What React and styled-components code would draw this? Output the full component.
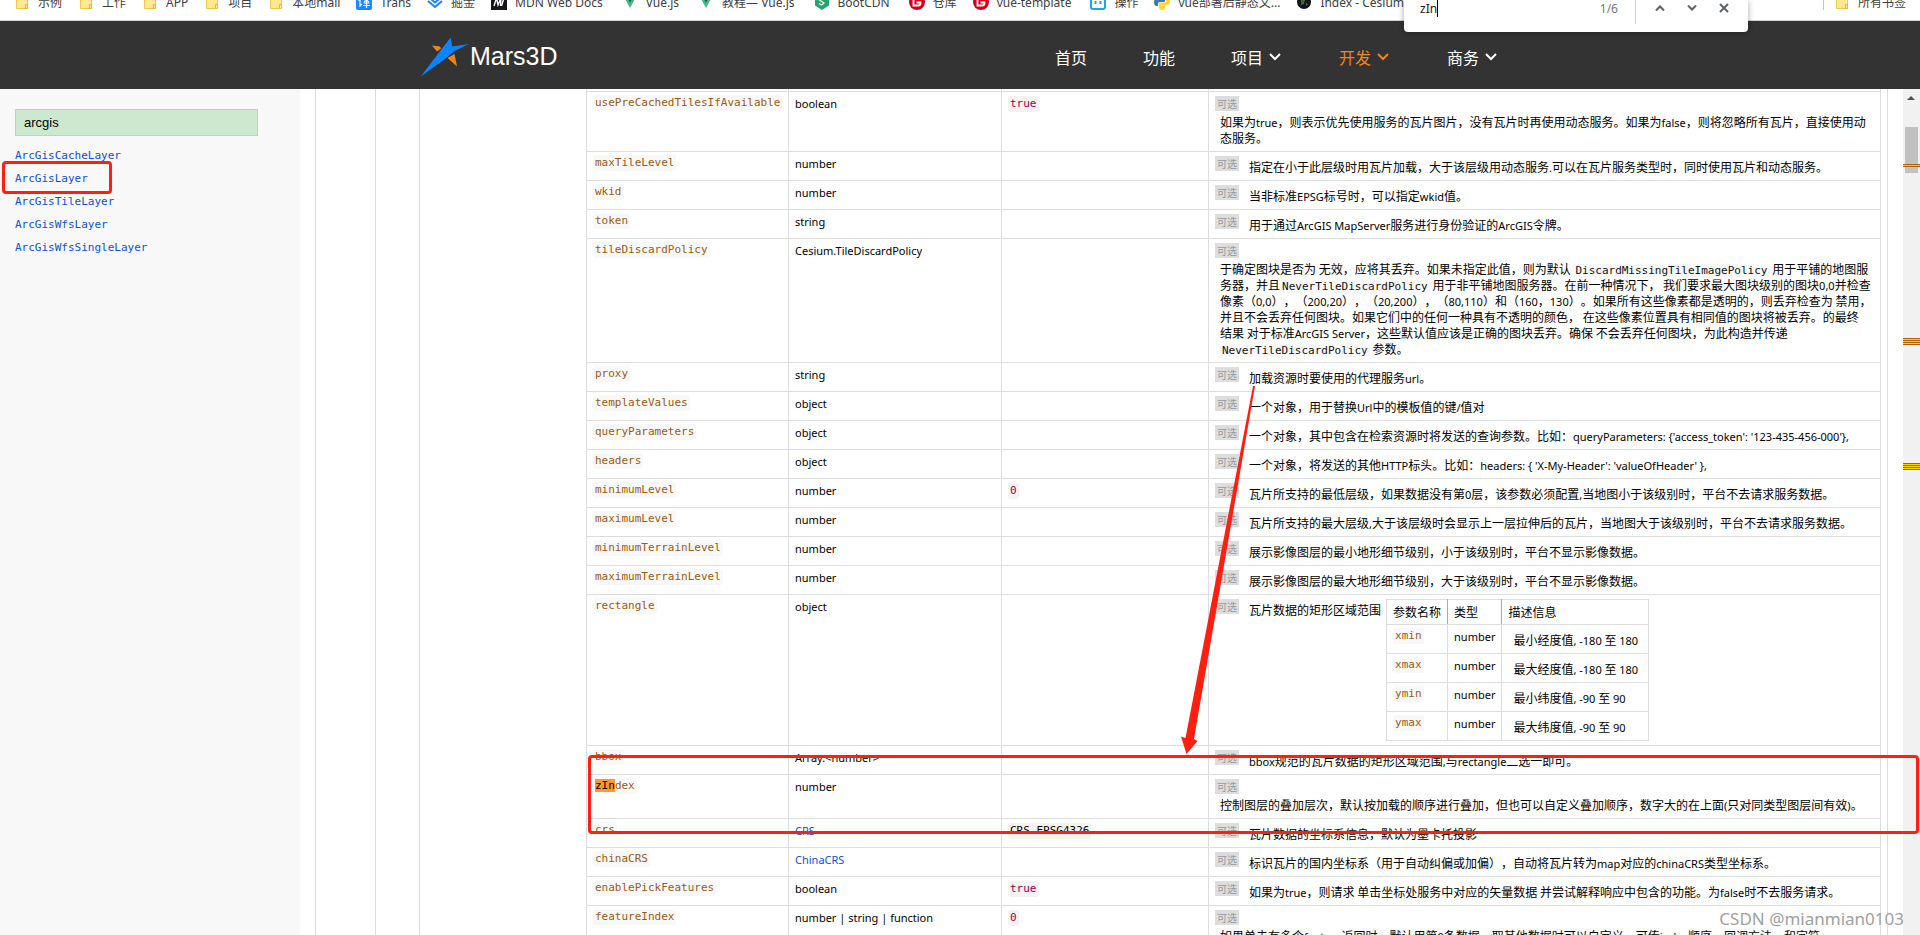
import React from 'react'
import styled, { createGlobalStyle } from 'styled-components'

const fonts = {
    sans: '"Noto Sans", "Noto Sans CJK SC", sans-serif',
    cjk: '"Noto Sans CJK SC", sans-serif',
    arial: '"Liberation Sans", sans-serif',
    mono: '"DejaVu Sans Mono", monospace',
}

const colors = {
    header: '#333333',
    accent: '#f08519',
    link: '#0d52d0',
    line: '#dddddd',
    code: '#9a5b10',
    red: '#ff1f10',
}

const GlobalStyle = createGlobalStyle`
    *, *::before, *::after {
        box-sizing : border-box;
    }
    body {
        margin : 0;
        background : #fff;
        color : #000;
        font-family : ${fonts.sans};
        font-size : 12px;
        overflow : hidden;
    }
    a {
        color : inherit;
        text-decoration : none;
    }
    button {
        border : 0;
        padding : 0;
        background : none;
        color : inherit;
        font : inherit;
    }
`

const Page = styled.div`
    position : relative;
    display : flex;
    flex-direction : column;
    height : 100vh;
    overflow : hidden;
`

/* bookmarks bar */

const BookmarkBar = styled.nav`
    display : flex;
    flex : none;
    justify-content : space-between;
    align-items : flex-start;
    height : 21px;
    padding : 0 14px;
    overflow : hidden;
    border-bottom : 1px solid #d0d4d4;
    color : #3c4043;
`

const BookmarkList = styled.div`
    display : flex;
    gap : 16px;
    margin-top : -6px;
`

const Bookmark = styled.a`
    display : flex;
    gap : 8px;
    height : 16px;
    margin-right : ${(p) => (p.$wide ? 3 : 0)}px;
    line-height : 18px;
    white-space : nowrap;

    svg {
        flex : none;
    }
`

const AllBookmarks = styled(BookmarkList)`
    &::before {
        content : '';
        width : 1px;
        height : 16px;
        margin-right : -6px;
        background : #c4c7c5;
    }
`

/* find in page */

const FindBar = styled.form`
    position : absolute;
    top : 0;
    right : 172px;
    z-index : 3;
    display : flex;
    width : 344px;
    height : 32px;
    padding : 0 8px 0 16px;
    border-radius : 0 0 4px 4px;
    background : #fff;
    box-shadow : 0 1px 6px rgba(0, 0, 0, 0.35);
    line-height : 18px;
`

const FindInput = styled.input`
    width : 18px;
    height : 17px;
    padding : 0;
    border : 0;
    border-right : 1px solid #000;
    outline : 0;
    color : #202124;
    font-family : ${fonts.sans};
    font-size : 12px;
`

const FindCount = styled.span`
    margin-left : auto;
    color : #777;
`

const FindDivider = styled.span`
    width : 1px;
    height : 24px;
    margin : 0 8px 0 17px;
    background : #d0d0d0;
`

const FindButton = styled.button`
    display : flex;
    justify-content : center;
    align-items : center;
    width : 32px;
    height : 16px;
    color : #5f6368;
`

/* site header */

const Header = styled.header`
    flex : none;
    height : 68px;
    background : ${colors.header};
    color : #fff;
`

const HeaderInner = styled.div`
    display : flex;
    justify-content : space-between;
    align-items : center;
    max-width : 1080px;
    height : 100%;
    margin : 0 auto;
    padding : 3px 1px 0 0;
`

const Logo = styled.a`
    display : flex;
    align-items : center;
    font-family : ${fonts.arial};
    font-size : 25px;
`

const Menu = styled.nav`
    display : flex;
    gap : 56px;
`

const MenuItem = styled.a`
    display : flex;
    align-items : center;
    gap : 6px;
    color : ${(p) => (p.$active ? colors.accent : '#fff')};
    font-family : ${fonts.cjk};
    font-size : 16px;
    line-height : 24px;

    svg {
        margin-right : 2px;
    }
`

/* body */

const Body = styled.div`
    display : flex;
    flex : 1;
    min-height : 0;
`

const Sidebar = styled.aside`
    flex : none;
    width : 300px;
    padding : 20px 15px;
    background : #f8f8f8;
`

const SearchInput = styled.input`
    display : block;
    width : 243px;
    height : 27px;
    padding : 0 8px;
    border : 1px solid #c8ccc8;
    outline : 0;
    background : #cce8cf;
    color : #000;
    font-family : ${fonts.arial};
    font-size : 13px;
`

const LinkList = styled.ul`
    margin : 8px 0 0;
    padding : 0;
    list-style : none;
    color : ${colors.link};
    font-family : ${fonts.mono};
    font-size : 11px;
    line-height : 23px;
`

const LinkItem = styled.li`
    position : relative;
`

const LinkFrame = styled.span`
    position : absolute;
    top : -6px;
    left : -13px;
    width : 110px;
    height : 33px;
    border : 3px solid ${colors.red};
    border-radius : 4px;
`

const Main = styled.main`
    display : flex;
    flex : 1;
    min-width : 0;
    margin-left : 15px;
    overflow : hidden;
    border-left : 1px solid ${colors.line};
`

const Gutter = styled.div`
    flex : none;
    width : ${(p) => p.$width}px;
    border-right : 1px solid ${colors.line};
`

const Content = styled.div`
    flex : 1;
    min-width : 0;
    margin-right : 15px;
    padding : 0 6px 0 166px;
    border-right : 1px solid ${colors.line};
`

const Table = styled.table`
    width : 100%;
    table-layout : fixed;
    border-collapse : collapse;

    td {
        padding : 4px 6px 5px;
        border : 1px solid ${colors.line};
        vertical-align : top;
        line-height : 16px;
    }
    td:first-child {
        padding-top : 3px;
    }
`

const Col = styled.col`
    width : ${(p) => p.$width}px;
`

const CutRow = styled.tr`
    td, td:first-child {
        height : 2px;
        padding : 0;
        border-top : 0;
    }
`

const Name = styled.code`
    display : inline-block;
    padding : 0 2px;
    border-radius : 3px;
    background : #f8f8f8;
    color : ${colors.code};
    font-family : ${fonts.mono};
    font-size : 11px;
    line-height : 16px;
    vertical-align : top;
`

const Value = styled(Name)`
    background : #f5f2f0;
    color : ${(p) => (p.$plain ? '#000' : '#990055')};
`

/* zero line height keeps the mixed fonts from growing the line */
const InlineCode = styled(Name)`
    display : inline;
    color : #111;
    line-height : 0;
    vertical-align : baseline;
`

const Hit = styled.mark`
    background : #ff9632;
    color : #000;
`

const Type = styled.span`
    display : block;
    color : ${(p) => (p.$link ? colors.link : 'inherit')};
    font-size : 11px;
    line-height : 16px;
`

const DescCell = styled.div`
    display : flex;
    flex-wrap : wrap;
    align-items : flex-start;
`

const Optional = styled.span`
    margin-right : 5px;
    padding : 0 2px;
    background : #dddddd;
    color : #999;
    font-family : ${fonts.cjk};
    font-size : 10px;
    line-height : 15px;
`

const Desc = styled.div`
    width : ${(p) => (p.$block ? '100%' : 'auto')};
    margin : 3px 0 0 5px;
    font-family : ${fonts.cjk};
    font-size : 12px;
    line-height : 16px;
    white-space : pre-line;
    text-spacing-trim : space-all;
`

const Latin = styled.span`
    font-family : ${fonts.sans};
    font-size : 11px;
    line-height : 0;
`

const SubTable = styled.table`
    margin : 0 0 -1px 5px;
    border-collapse : collapse;

    th, td {
        border : 1px solid ${colors.line};
        text-align : left;
        vertical-align : top;
        white-space : nowrap;
    }
    th {
        padding : 4px 6px;
        border-right-color : #aaa;
        font-weight : 400;
        font-family : ${fonts.cjk};
        line-height : 16px;
    }
    th:last-child {
        border-right-color : ${colors.line};
    }
    td:last-child {
        padding-right : 10px;
    }
`

/* scrollbar with the find marks */

const Scrollbar = styled.div`
    position : relative;
    flex : none;
    width : 17px;
    padding : 38px 2px 0;
    background : #f1f1f1;

    &::before {
        content : '';
        position : absolute;
        top : 7px;
        left : 4px;
        border : 4px solid transparent;
        border-top-width : 0;
        border-bottom-color : #505050;
    }
`

const Thumb = styled.div`
    height : 46px;
    background : #c1c1c1;
`

const FindMark = styled.span`
    position : absolute;
    left : 0;
    right : 0;
    top : ${(p) => p.$top}px;
    height : ${(p) => p.$height}px;
    background : repeating-linear-gradient(#b06000 0 1px, #ffd500 1px 2px);
`

/* red marks over the page */

const RowFrame = styled.div`
    position : absolute;
    top : 755px;
    left : 588px;
    right : 1px;
    z-index : 2;
    height : 79px;
    border : 3px solid ${colors.red};
    border-radius : 4px;
`

const Arrow = styled.svg`
    position : absolute;
    top : 386px;
    left : 1180px;
    z-index : 2;
`

const Watermark = styled.div`
    position : absolute;
    right : 16px;
    bottom : 4px;
    z-index : 2;
    color : #a0a0a0;
    font-size : 17px;
    line-height : 24px;
    text-shadow : 1px 1px 0 #fff;
`

const FolderIcon = () => (
    <svg width="16" height="16" viewBox="0 0 16 16">
        <path d="M2.5 1.5h6l2 2h3v11h-11z" fill="#ffe794" stroke="#efc94c" />
        <path d="M11.5 10.5h2v4h-2z" fill="#ffe794" stroke="#e3b93c" />
    </svg>
)

const TransIcon = () => (
    <svg width="16" height="16" viewBox="0 0 16 16">
        <rect width="16" height="16" rx="2" fill="#1a86ff" />
        <path d="M2 6h2v6l2-2M7 4h6l-5 4M8 4l5 4M10.500 7v7M7.500 9h6M7 11.500h7" fill="none" stroke="#fff" strokeWidth="1.2" />
    </svg>
)

const JuejinIcon = () => (
    <svg width="16" height="16" viewBox="0 0 16 16">
        <path d="M1 7l7 6 7-6M4.500 5.500L8 8.500l3.500-3" fill="none" stroke="#1e80ff" strokeWidth="2" />
    </svg>
)

const MdnIcon = () => (
    <svg width="16" height="16" viewBox="0 0 16 16">
        <rect width="16" height="16" fill="#15141a" />
        <path d="M3 12L5.500 4l1.500 7 3-7-.5 8M13 4l-2.500 8" fill="none" stroke="#fff" strokeWidth="1.4" />
    </svg>
)

const VueIcon = () => (
    <svg width="16" height="16" viewBox="0 0 16 16">
        <path d="M1 1h14L8 14z" fill="#41b883" />
        <path d="M4 1h8L8 8.500z" fill="#35495e" />
    </svg>
)

const BootIcon = () => (
    <svg width="16" height="16" viewBox="0 0 16 16">
        <path d="M1 1h14v10.500L8 16l-7-4.500z" fill="#26a36b" />
        <path d="M10.500 5.500L8 4 5.500 6 10 9 7.500 11 5 9.500" fill="none" stroke="#fff" strokeWidth="1.2" />
    </svg>
)

const GiteeIcon = () => (
    <svg width="16" height="16" viewBox="0 0 16 16">
        <circle cx="8" cy="8" r="8" fill="#d7001a" />
        <path d="M12 4.500H7Q4.500 4.500 4.500 7v4.500h5Q11.500 11.500 11.500 8.500H7.500" fill="none" stroke="#fff" strokeWidth="1.800" />
    </svg>
)

const BotIcon = () => (
    <svg width="16" height="16" viewBox="0 0 16 16">
        <rect x="1" y="1" width="14" height="14" rx="2" fill="#fff" stroke="#1aa7dc" strokeWidth="2" />
        <path d="M5.500 7v3M10.500 7v3" stroke="#1aa7dc" strokeWidth="2" />
    </svg>
)

const PythonIcon = () => (
    <svg width="16" height="16" viewBox="0 0 16 16">
        <path d="M8 0C5 0 5 1 5 3v1h4v1H3C1 5 0 6 0 8.500S1 12 3 12h1V9.500Q4 8 6 8h4q1 0 1-1.500V3c0-2-1-3-3-3z" fill="#3c78aa" />
        <path d="M8 16c3 0 3-1 3-3v-1H7v-1h6c2 0 3-1 3-3.500S15 4 13 4h-1v2.500Q12 8.500 10 8.500H6q-1 0-1 1.500v3c0 2 1 3 3 3z" fill="#ffd43b" />
    </svg>
)

const CesiumIcon = () => (
    <svg width="16" height="16" viewBox="0 0 16 16">
        <circle cx="8" cy="8" r="7" fill="#11161c" />
        <path d="M5 4l4 2-1 4-3 1z" fill="#49603f" />
        <path d="M10 9l2 1-2 2z" fill="#5b7488" />
    </svg>
)

const Chevron = () => (
    <svg width="12" height="8" viewBox="0 0 12 8">
        <path d="M1 1l5 5 5-5" fill="none" stroke="currentColor" strokeWidth="2" />
    </svg>
)

const LogoMark = () => (
    <svg width="50" height="40" viewBox="0 0 50 40">
        <path d="M12 8.500l8 1 1 2-4 3z" fill="#f08519" />
        <path d="M34.500 17l2.500 12.500L27.500 21z" fill="#f08519" />
        <path d="M.7 39.500L20.500 13.500 30.700.5l1.500 9L49 7 34.500 14 25 22z" fill="#0a85ff" />
    </svg>
)

const bookmarks = [
    { icon: <FolderIcon />, label: '示例' },
    { icon: <FolderIcon />, label: '工作' },
    { icon: <FolderIcon />, label: 'APP' },
    { icon: <FolderIcon />, label: '项目' },
    { icon: <FolderIcon />, label: '本地mall' },
    { icon: <TransIcon />, label: 'Trans' },
    { icon: <JuejinIcon />, label: '掘金' },
    { icon: <MdnIcon />, label: 'MDN Web Docs', wide: true },
    { icon: <VueIcon />, label: 'Vue.js', wide: true },
    { icon: <VueIcon />, label: '教程— Vue.js', wide: true },
    { icon: <BootIcon />, label: 'BootCDN', wide: true },
    { icon: <GiteeIcon />, label: '仓库' },
    { icon: <GiteeIcon />, label: 'vue-template', wide: true },
    { icon: <BotIcon />, label: '操作' },
    { icon: <PythonIcon />, label: 'vue部署后静态文...' },
    { icon: <CesiumIcon />, label: 'Index - Cesium' },
]

const menu = [
    { label: '首页' },
    { label: '功能' },
    { label: '项目', sub: true },
    { label: '开发', sub: true, active: true },
    { label: '商务', sub: true },
]

const classes = ['ArcGisCacheLayer', 'ArcGisLayer', 'ArcGisTileLayer', 'ArcGisWfsLayer', 'ArcGisWfsSingleLayer']

// `text in backticks` becomes code, latin runs get the latin font
const RichText = ({ text }) =>
    text.split(/(`[^`]+`|[\x21-\x5f\x61-\x7e][\x20-\x5f\x61-\x7e]*)/).map((part, i) => {
        if (part.startsWith('`')) return <InlineCode key={i}>{part.slice(1, -1)}</InlineCode>
        if (i % 2) return <Latin key={i}>{part}</Latin>
        return part
    })

const extent = [
    { name: 'xmin', desc: '最小经度值, -180 至 180' },
    { name: 'xmax', desc: '最大经度值, -180 至 180' },
    { name: 'ymin', desc: '最小纬度值, -90 至 90' },
    { name: 'ymax', desc: '最大纬度值, -90 至 90' },
]

const ExtentTable = () => (
    <SubTable>
        <thead>
            <tr>
                <th>参数名称</th>
                <th>类型</th>
                <th>描述信息</th>
            </tr>
        </thead>
        <tbody>
            {extent.map((item) => (
                <tr key={item.name}>
                    <td><Name>{item.name}</Name></td>
                    <td><Type>number</Type></td>
                    <td><Desc><RichText text={item.desc} /></Desc></td>
                </tr>
            ))}
        </tbody>
    </SubTable>
)

const discardPolicy = [
    '于确定图块是否为 无效，应将其丢弃。如果未指定此值，则为默认 `DiscardMissingTileImagePolicy` 用于平铺的地图服',
    '务器，并且`NeverTileDiscardPolicy` 用于非平铺地图服务器。在前一种情况下， 我们要求最大图块级别的图块0,0并检查',
    '像素（0,0），（200,20），（20,200），（80,110）和（160，130）。如果所有这些像素都是透明的，则丢弃检查为 禁用，',
    '并且不会丢弃任何图块。如果它们中的任何一种具有不透明的颜色， 在这些像素位置具有相同值的图块将被丢弃。的最终',
    '结果 对于标准ArcGIS Server，这些默认值应该是正确的图块丢弃。确保 不会丢弃任何图块，为此构造并传递',
    '`NeverTileDiscardPolicy` 参数。',
].join('\n')

const options = [
    { name: 'usePreCachedTilesIfAvailable', type: 'boolean', value: 'true', desc: '如果为true，则表示优先使用服务的瓦片图片，没有瓦片时再使用动态服务。如果为false，则将忽略所有瓦片，直接使用动态服务。' },
    { name: 'maxTileLevel', type: 'number', desc: '指定在小于此层级时用瓦片加载，大于该层级用动态服务.可以在瓦片服务类型时，同时使用瓦片和动态服务。' },
    { name: 'wkid', type: 'number', desc: '当非标准EPSG标号时，可以指定wkid值。' },
    { name: 'token', type: 'string', desc: '用于通过ArcGIS MapServer服务进行身份验证的ArcGIS令牌。' },
    { name: 'tileDiscardPolicy', type: 'Cesium.TileDiscardPolicy', desc: discardPolicy },
    { name: 'proxy', type: 'string', desc: '加载资源时要使用的代理服务url。' },
    { name: 'templateValues', type: 'object', desc: '一个对象，用于替换Url中的模板值的键/值对' },
    { name: 'queryParameters', type: 'object', desc: "一个对象，其中包含在检索资源时将发送的查询参数。比如：queryParameters: {'access_token': '123-435-456-000'}," },
    { name: 'headers', type: 'object', desc: "一个对象，将发送的其他HTTP标头。比如：headers: { 'X-My-Header': 'valueOfHeader' }," },
    { name: 'minimumLevel', type: 'number', value: '0', desc: '瓦片所支持的最低层级，如果数据没有第0层，该参数必须配置,当地图小于该级别时，平台不去请求服务数据。' },
    { name: 'maximumLevel', type: 'number', desc: '瓦片所支持的最大层级,大于该层级时会显示上一层拉伸后的瓦片，当地图大于该级别时，平台不去请求服务数据。' },
    { name: 'minimumTerrainLevel', type: 'number', desc: '展示影像图层的最小地形细节级别，小于该级别时，平台不显示影像数据。' },
    { name: 'maximumTerrainLevel', type: 'number', desc: '展示影像图层的最大地形细节级别，大于该级别时，平台不显示影像数据。' },
    { name: 'rectangle', type: 'object', desc: '瓦片数据的矩形区域范围', extra: <ExtentTable /> },
    { name: 'bbox', type: 'Array.<number>', desc: 'bbox规范的瓦片数据的矩形区域范围,与rectangle二选一即可。' },
    { name: 'zIndex', hit: 'zIn', type: 'number', desc: '控制图层的叠加层次，默认按加载的顺序进行叠加，但也可以自定义叠加顺序，数字大的在上面(只对同类型图层间有效)。' },
    { name: 'crs', type: 'CRS', link: true, value: 'CRS.EPSG4326', plain: true, desc: '瓦片数据的坐标系信息，默认为墨卡托投影' },
    { name: 'chinaCRS', type: 'ChinaCRS', link: true, desc: '标识瓦片的国内坐标系（用于自动纠偏或加偏），自动将瓦片转为map对应的chinaCRS类型坐标系。' },
    { name: 'enablePickFeatures', type: 'boolean', value: 'true', desc: '如果为true，则请求 单击坐标处服务中对应的矢量数据 并尝试解释响应中包含的功能。为false时不去服务请求。' },
    { name: 'featureIndex', type: 'number | string | function', value: '0', block: true, desc: '如果单击有多个feature返回时，默认用第0条数据，取其他数据时可以自定义，可传index顺序、回调方法、和字符' },
]

const OptionRow = ({ name, hit, type, link, value, plain, desc, block, extra }) => (
    <tr>
        <td>
            <Name>
                {hit && <Hit>{hit}</Hit>}
                {hit ? name.slice(hit.length) : name}
            </Name>
        </td>
        <td>
            {link ? <Type as="a" href={`#${type}`} $link>{type}</Type> : <Type>{type}</Type>}
        </td>
        <td>{value && <Value $plain={plain}>{value}</Value>}</td>
        <td>
            <DescCell>
                <Optional>可选</Optional>
                <Desc $block={block}><RichText text={desc} /></Desc>
                {extra}
            </DescCell>
        </td>
    </tr>
)

const Find = () => (
    <FindBar>
        <FindInput aria-label="查找" defaultValue="zIn" />
        <FindCount>1/6</FindCount>
        <FindDivider />
        <FindButton type="button" aria-label="上一个">
            <svg width="10" height="6" viewBox="0 0 10 6"><path d="M1 5.500l4-4 4 4" fill="none" stroke="currentColor" strokeWidth="2" /></svg>
        </FindButton>
        <FindButton type="button" aria-label="下一个">
            <svg width="10" height="6" viewBox="0 0 10 6"><path d="M1 .5l4 4 4-4" fill="none" stroke="currentColor" strokeWidth="2" /></svg>
        </FindButton>
        <FindButton type="button" aria-label="关闭">
            <svg width="10" height="10" viewBox="0 0 10 10"><path d="M1 1l8 8M9 1L1 9" fill="none" stroke="currentColor" strokeWidth="2" /></svg>
        </FindButton>
    </FindBar>
)

const App = () => (
    <Page>
        <GlobalStyle />
        <BookmarkBar>
            <BookmarkList>
                {bookmarks.map((item) => (
                    <Bookmark key={item.label} href="#" $wide={item.wide}>{item.icon}{item.label}</Bookmark>
                ))}
            </BookmarkList>
            <AllBookmarks>
                <Bookmark href="#"><FolderIcon />所有书签</Bookmark>
            </AllBookmarks>
        </BookmarkBar>
        <Find />

        <Header>
            <HeaderInner>
                <Logo href="#"><LogoMark />Mars3D</Logo>
                <Menu>
                    {menu.map((item) => (
                        <MenuItem key={item.label} href="#" $active={item.active}>
                            {item.label}
                            {item.sub && <Chevron />}
                        </MenuItem>
                    ))}
                </Menu>
            </HeaderInner>
        </Header>

        <Body>
            <Sidebar>
                <SearchInput aria-label="搜索" defaultValue="arcgis" />
                <LinkList>
                    {classes.map((name) => (
                        <LinkItem key={name}>
                            <a href={`#${name}`}>{name}</a>
                            {name === 'ArcGisLayer' && <LinkFrame />}
                        </LinkItem>
                    ))}
                </LinkList>
            </Sidebar>
            <Main>
                <Gutter $width={60} />
                <Gutter $width={44} />
                <Content>
                    <Table>
                        <colgroup>
                            <Col $width={202} />
                            <Col $width={213} />
                            <Col $width={207} />
                            <col />
                        </colgroup>
                        <tbody>
                            <CutRow><td /><td /><td /><td /></CutRow>
                            {options.map((item) => <OptionRow key={item.name} {...item} />)}
                        </tbody>
                    </Table>
                </Content>
            </Main>
            <Scrollbar>
                <Thumb />
                <FindMark $top={75} $height={3} />
                <FindMark $top={249} $height={7} />
                <FindMark $top={374} $height={7} />
            </Scrollbar>
        </Body>

        <RowFrame />
        <Arrow width="80" height="370" viewBox="0 0 80 370">
            <path d="M73 0h2L14 353l3.500 2-11 13L1 350.500l4.500 1.500z" fill={colors.red} />
        </Arrow>
        <Watermark>CSDN @mianmian0103</Watermark>
    </Page>
)

export default App
